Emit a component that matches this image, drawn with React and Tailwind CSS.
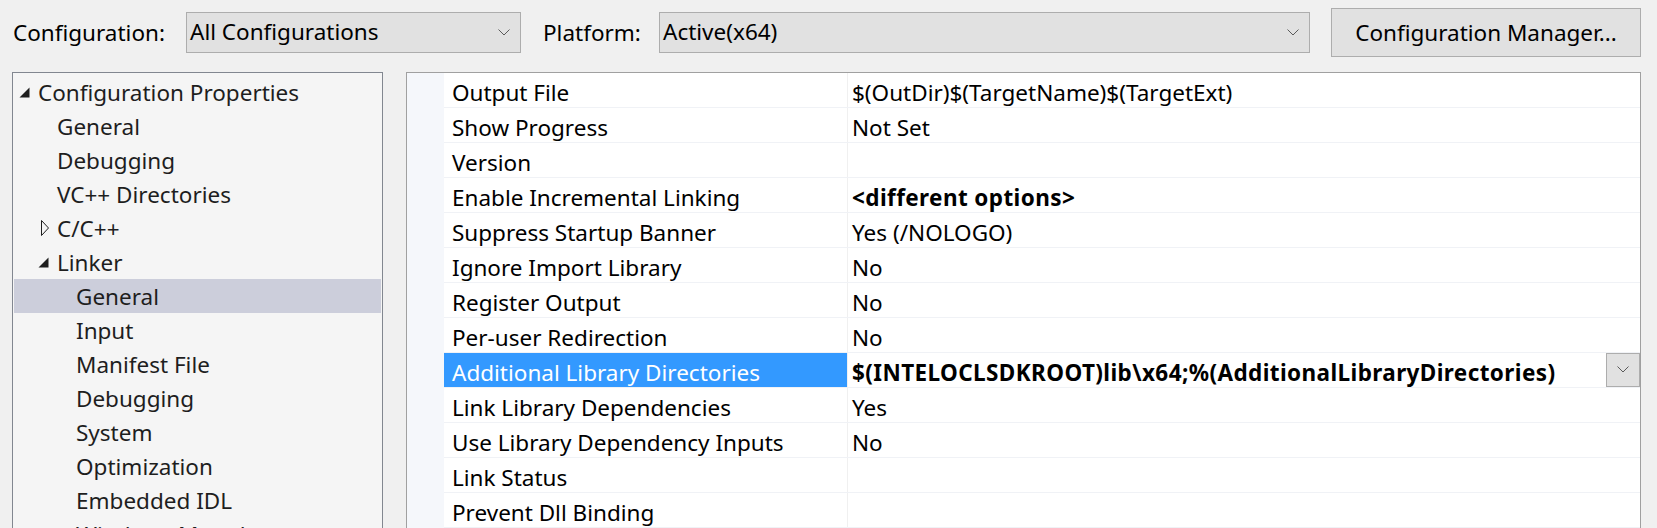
import React from 'react';

const tree = [
    { label: 'Configuration Properties', level: 0, glyph: 'open' },
    { label: 'General', level: 1 },
    { label: 'Debugging', level: 1 },
    { label: 'VC++ Directories', level: 1 },
    { label: 'C/C++', level: 1, glyph: 'closed' },
    { label: 'Linker', level: 1, glyph: 'open' },
    { label: 'General', level: 2, selected: true },
    { label: 'Input', level: 2 },
    { label: 'Manifest File', level: 2 },
    { label: 'Debugging', level: 2 },
    { label: 'System', level: 2 },
    { label: 'Optimization', level: 2 },
    { label: 'Embedded IDL', level: 2 },
    { label: 'Windows Metadata', level: 2 },
];

const props = [
    { name: 'Output File', value: '$(OutDir)$(TargetName)$(TargetExt)' },
    { name: 'Show Progress', value: 'Not Set' },
    { name: 'Version', value: '' },
    { name: 'Enable Incremental Linking', value: '<different options>', bold: true },
    { name: 'Suppress Startup Banner', value: 'Yes (/NOLOGO)' },
    { name: 'Ignore Import Library', value: 'No' },
    { name: 'Register Output', value: 'No' },
    { name: 'Per-user Redirection', value: 'No' },
    { name: 'Additional Library Directories', value: '$(INTELOCLSDKROOT)lib\\x64;%(AdditionalLibraryDirectories)', bold: true, active: true },
    { name: 'Link Library Dependencies', value: 'Yes' },
    { name: 'Use Library Dependency Inputs', value: 'No' },
    { name: 'Link Status', value: '' },
    { name: 'Prevent Dll Binding', value: '' },
];

const Chevron = ({ className = '' }) => (
    <svg width="12" height="7" viewBox="0 0 12 7" className={className}>
        <path d="M0.5 0.5 L6 6 L11.5 0.5" fill="none" stroke="#5a5a5a" strokeWidth="1" />
    </svg>
);

const Glyph = ({ type }) => {
    if (type === 'open') {
        return (
            <svg width="11" height="11" viewBox="0 0 11 11">
                <path d="M10.5 0.5 L10.5 10.5 L0.5 10.5 Z" fill="#1e1e1e" />
            </svg>
        );
    }
    if (type === 'closed') {
        return (
            <svg width="12" height="16" viewBox="0 0 12 16">
                <path d="M3.5 0.5 L10.5 8 L3.5 15.5 Z" fill="none" stroke="#1e1e1e" strokeWidth="1" />
            </svg>
        );
    }
    return null;
};

const Combo = ({ text, width }) => (
    <div className={`${width} h-[41px] flex items-center justify-between bg-[#e1e1e1] border border-[#adadad] pl-[3px] pr-[10px]`}>
        <span className="text-[22.5px] leading-none">{text}</span>
        <Chevron />
    </div>
);

export default function App() {
    return (
        <div className="w-[1657px] h-[528px] overflow-hidden bg-[#f0f0f0] text-[#000] font-['Noto_Sans',sans-serif]">
            {/* toolbar */}
            <div className="h-[65px] flex items-center pl-[13px]">
                <span className="text-[22.5px] w-[173px]">Configuration:</span>
                <Combo text="All Configurations" width="w-[335px]" />
                <span className="text-[22.5px] ml-[22px] w-[116px]">Platform:</span>
                <Combo text="Active(x64)" width="w-[651px]" />
                <button className="ml-[21px] w-[310px] h-[49px] bg-[#e1e1e1] border border-[#adadad] text-[22.5px]">
                    Configuration Manager...
                </button>
            </div>

            <div className="flex items-start pl-[12px] pt-[7px]">
                {/* tree */}
                <div className="w-[371px] h-[480px] border border-[#828790] bg-[#f5f5f5] p-[1px] pt-[2px]">
                    {tree.map((item, i) => (
                        <div
                            key={i}
                            className={`h-[34px] flex items-center pt-[2px] text-[22.5px] text-[#1e1e1e] ${item.selected ? 'bg-[#cccedb]' : ''}`}
                            style={{ paddingLeft: 5 + item.level * 19 }}
                        >
                            <span className="w-[19px] flex items-center justify-start -mt-[2px]">
                                <Glyph type={item.glyph} />
                            </span>
                            <span>{item.label}</span>
                        </div>
                    ))}
                </div>

                {/* property grid */}
                <div className="ml-[23px] w-[1235px] h-[480px] border border-[#a0a0a0] bg-white flex">
                    <div className="w-[37px] bg-[#f5f7fb]" />
                    <div className="flex-1">
                        {props.map((p, i) => (
                            <div key={i} className="h-[35px] flex border-b border-[#f0f2f6]">
                                <div className={`w-[403px] flex items-center pl-[8px] pt-[5px] text-[22.5px] ${p.active ? 'bg-[#3399ff] text-white' : ''}`}>
                                    {p.name}
                                </div>
                                <div className="flex-1 flex items-center justify-between border-l border-[#f0f0f0] pl-[4px]">
                                    <span className={`pt-[5px] text-[22.5px] ${p.bold ? 'font-bold tracking-[0.4px]' : ''}`}>{p.value}</span>
                                    {p.active && (
                                        <div className="w-[34px] h-[34px] -mt-[1px] flex items-center justify-center bg-[#e1e1e1] border border-[#adadad]">
                                            <Chevron />
                                        </div>
                                    )}
                                </div>
                            </div>
                        ))}
                    </div>
                </div>
            </div>
        </div>
    );
}
